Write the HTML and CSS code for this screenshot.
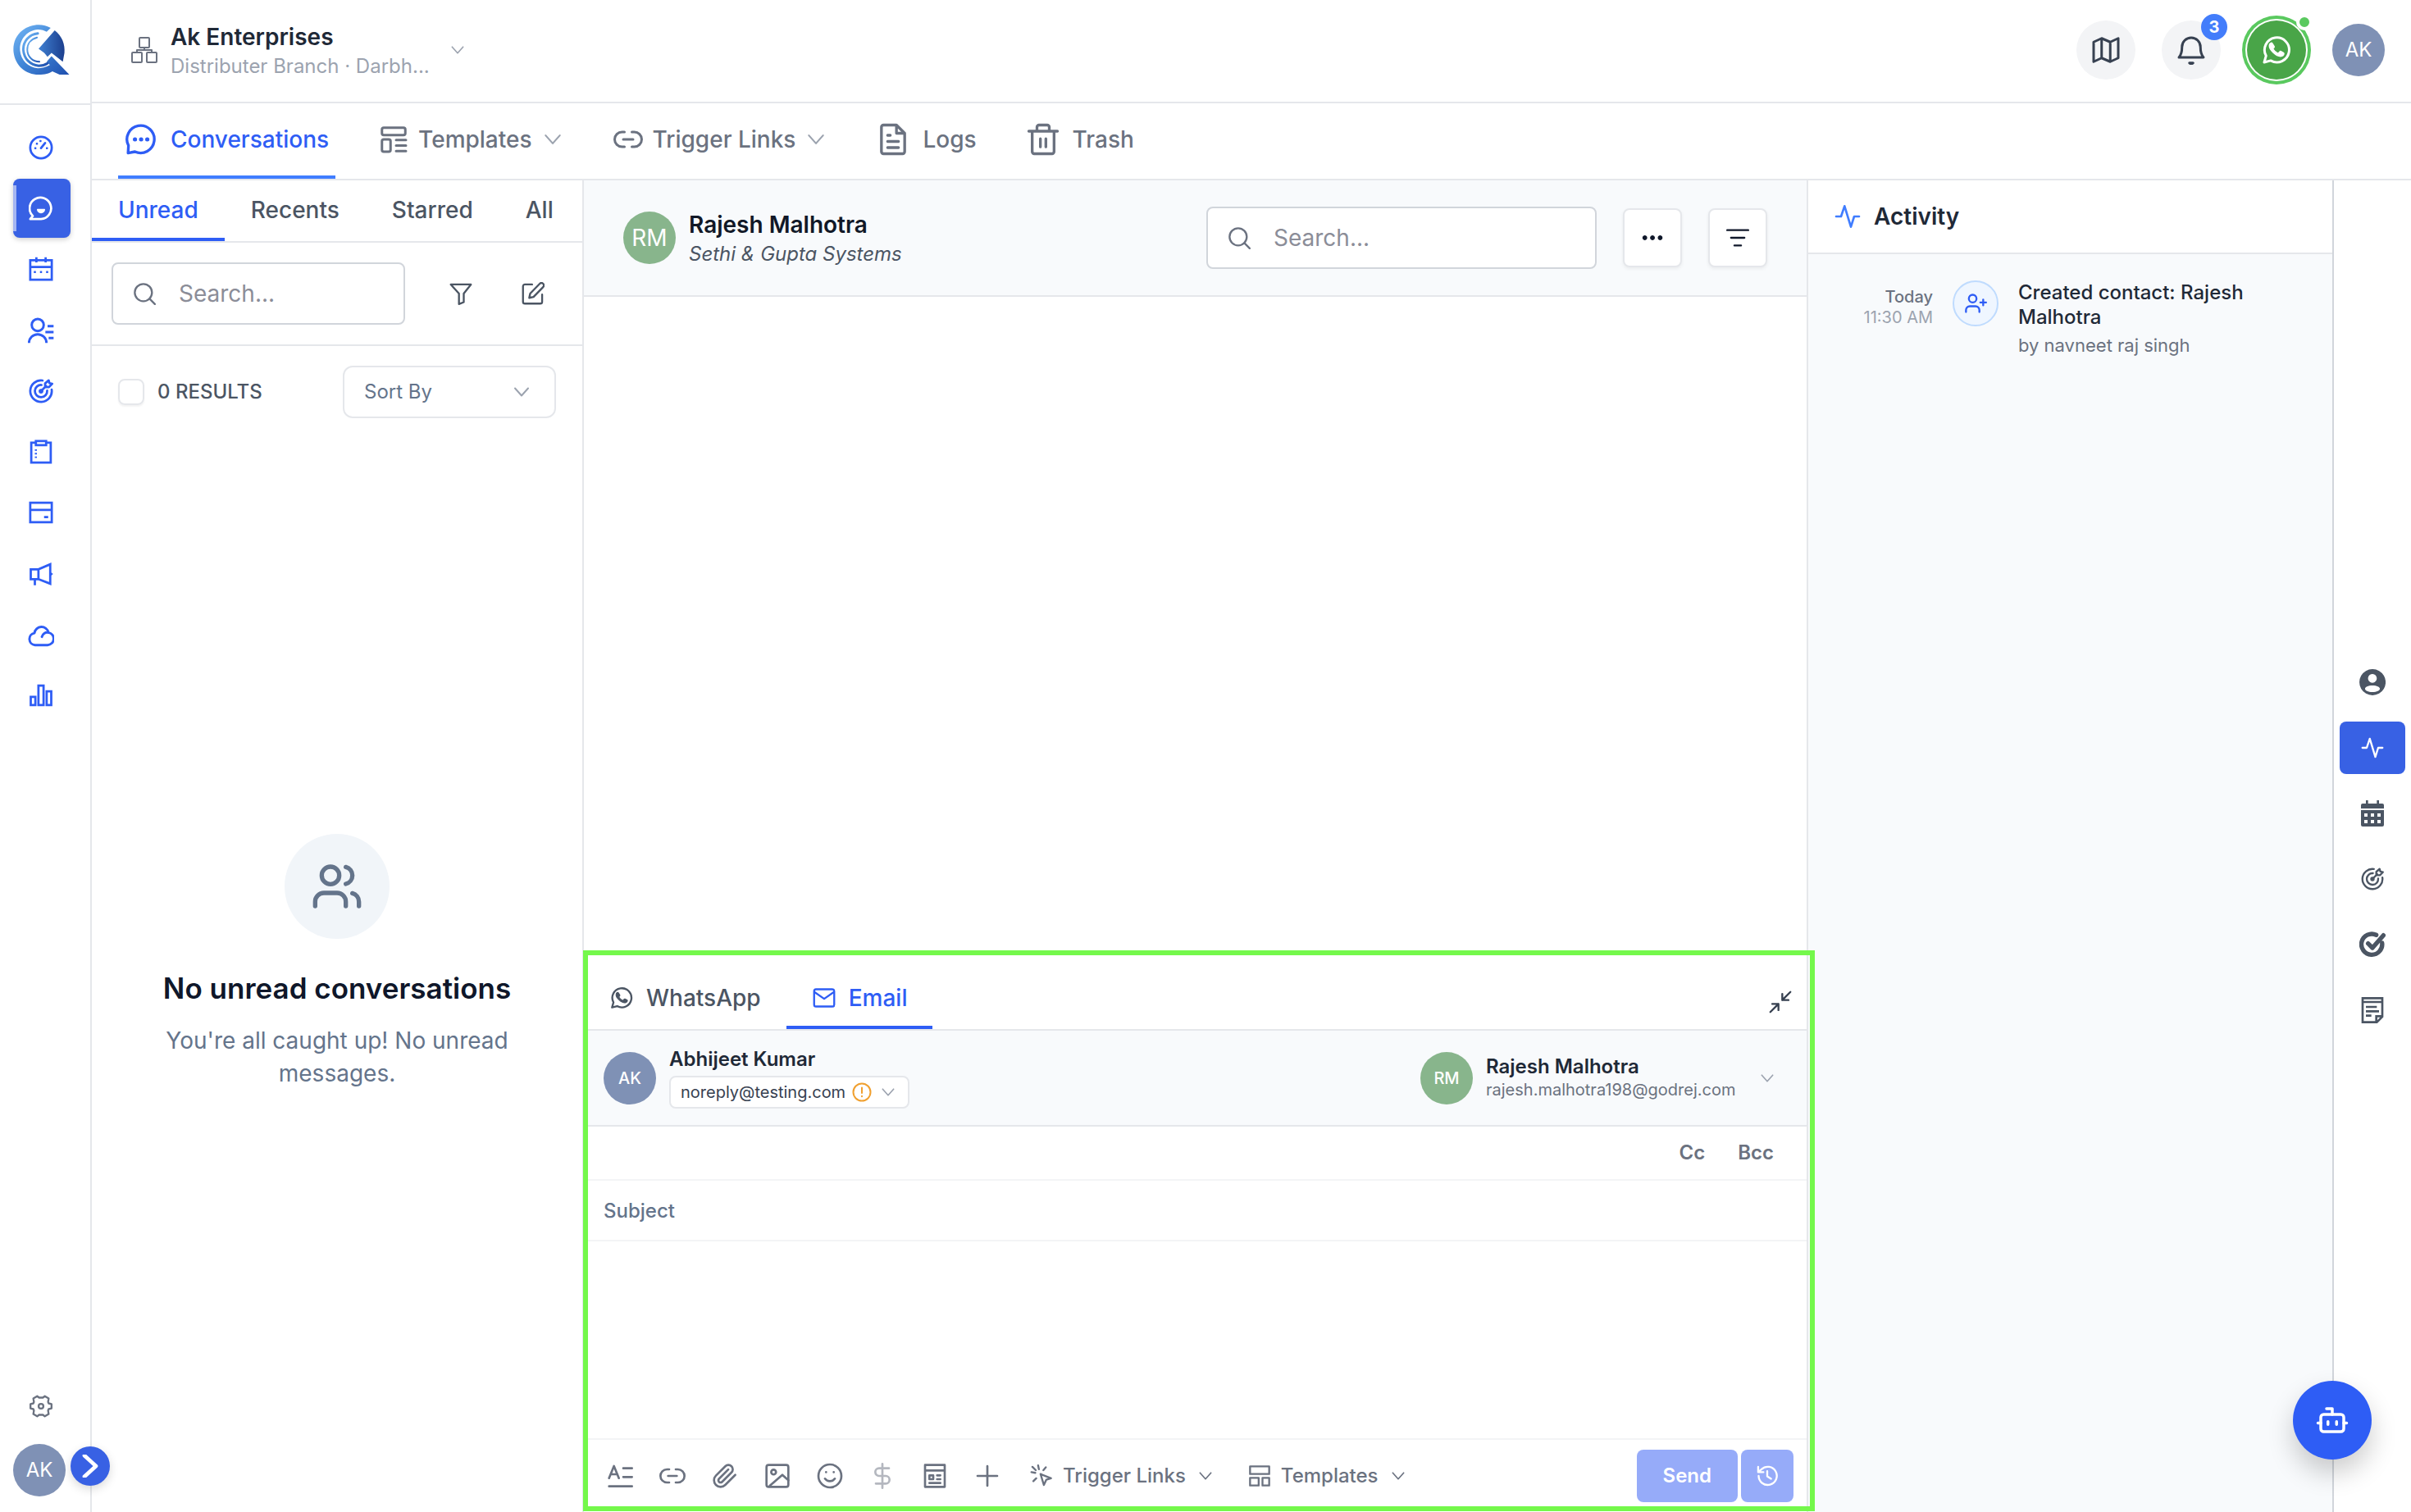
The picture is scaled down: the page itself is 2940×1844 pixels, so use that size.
FILE: index.html
```html
<!DOCTYPE html>
<html lang="en">
<head>
    <meta charset="UTF-8">
    <meta name="viewport" content="width=device-width, initial-scale=1.0">
    <title>Conversations</title>
    <link rel="stylesheet" href="styles.css">
</head>
<body>

<!-- shared icons -->
<svg class="sprite" aria-hidden="true">
    <symbol id="i-chevron" viewBox="0 0 24 24"><path d="M4 7.500l8 9 8-9"/></symbol>
    <symbol id="i-search" viewBox="0 0 24 24"><circle cx="11" cy="11" r="9"/><path d="M17.500 17.500L23 23"/></symbol>
    <symbol id="i-whatsapp" viewBox="0 0 24 24"><path d="M2 22l1.500-5.300A10 10 0 1 1 7.300 20.600z"/><path class="solid" d="M8.600 6.700c-.3-.5-.7-.5-1-.4-.8.3-1.400 1.200-1.400 2.400 0 1.600 1.200 3.500 3.100 5.300 2.200 2.100 4.300 3.100 6 3.100 1.400-.1 2.400-.9 2.700-1.900.1-.5 0-.8-.4-1l-2.100-1c-.4-.2-.7-.1-.9.200l-.9 1.100c-.2.200-.5.300-.9.100-1.500-.7-2.600-1.700-3.500-3.200-.2-.3-.1-.5.1-.8l.6-.8c.2-.2.2-.4.100-.7z"/></symbol>
    <symbol id="i-target" viewBox="0 0 24 24"><path d="M13.500 1.600A10.500 10.500 0 1 0 22.400 10.500"/><path d="M12.500 6A6 6 0 1 0 18 11.500"/><circle class="solid" cx="12" cy="12" r="1.800"/><path d="M12 12l5-5M16 8V4.500L19.500 1.500l.7 2.700 2.700.7L19.800 8z"/></symbol>
    <symbol id="i-activity" viewBox="0 0 24 24"><path d="M1.500 12H6L9.200 2.500 15 21.500 18 12h4.500"/></symbol>
    <symbol id="i-link" viewBox="0 0 24 24"><path d="M9 6H7a6 6 0 0 0 0 12h2M15 6h2a6 6 0 0 1 0 12h-2M8 12h8"/></symbol>
</svg>

<div class="app">

    <aside class="sidebar">
        <a class="logo" href="#" aria-label="Home">
            <svg viewBox="15 30 72 65">
                <defs>
                    <linearGradient id="ring" x1="0" y1="0" x2="1" y2="1">
                        <stop offset="0" stop-color="#74b7f5"/>
                        <stop offset=".5" stop-color="#3f84d6"/>
                        <stop offset="1" stop-color="#1f4fae"/>
                    </linearGradient>
                    <linearGradient id="wing" x1="0" y1="0" x2="1" y2="0">
                        <stop offset="0" stop-color="#3f80d2"/>
                        <stop offset="1" stop-color="#1c3f8e"/>
                    </linearGradient>
                </defs>
                <path fill="url(#ring)" d="M62 35C52 29 37 30 27 38 18 45 15 55 16 65 18 82 31 93 47 93 55 93 60 92 64 89L73 93H85L63 70 57 77 61 81C56 84 51 85 46 85 34 84 25 75 24 63 23 49 33 38 46 37 51 37 54 38 57 40z"/>
                <path fill="none" stroke="url(#ring)" stroke-width="3" d="M46 42C35 43 28 52 28 62 29 74 37 81 47 82 52 82 55 81 58 79"/>
                <path fill="none" stroke="url(#ring)" stroke-width="2" d="M45 47C37 49 33 55 33 62 33 71 40 77 48 77"/>
                <path fill="url(#wing)" d="M67 38C76 45 80 55 79 66L77 77 63 66 58 71 54 66 47 61z"/>
            </svg>
        </a>
        <nav class="side-nav" aria-label="Main">
            <a href="#" aria-label="Dashboard"><svg viewBox="0 0 24 24"><circle cx="12" cy="12" r="10.500"/><path d="M12 12.500l4-5"/><path class="solid" d="M11 5h1v1h-1zM6 12h1v1H6zM17.300 12h1v1h-1zM7.500 7.700h1v1h-1z"/></svg></a>
            <a href="#" class="active" aria-label="Conversations"><svg viewBox="0 0 24 24"><path d="M1.500 22.500L4 19.500A10.500 10.500 0 1 1 12 22.500z"/><path class="solid" d="M8.500 13h7a3.500 3.500 0 0 1-7 0z"/></svg></a>
            <a href="#" aria-label="Calendar"><svg viewBox="0 0 24 24" class="sharp"><path d="M1.500 3.500h21v19h-21zM1.500 10h21M7.500 .5v5M16.500 .5v5"/><path class="solid" d="M5.500 14.500h1v1h-1zM11.500 14.500h1v1h-1zM17.500 14.500h1v1h-1z"/></svg></a>
            <a href="#" aria-label="Contacts"><svg viewBox="0 0 24 24" class="sharp wide"><circle cx="9" cy="7" r="5.500"/><path d="M1 23.500a8 8 0 0 1 16 0M18 8h5.500M16 13.500h7.500M19 19h4.500"/></svg></a>
            <a href="#" aria-label="Opportunities"><svg><use href="#i-target"/></svg></a>
            <a href="#" aria-label="Tasks"><svg viewBox="0 0 24 24" class="sharp"><path d="M7 3H2.500v19.500h19V3H17M7 1.500h10v4H7z"/><path class="solid" d="M6.500 10h1v.5h-1zM6.500 13.500h1v.5h-1zM6.500 17h1v.5h-1z"/></svg></a>
            <a href="#" aria-label="Payments"><svg viewBox="0 0 24 24" class="sharp"><path d="M1.500 2.500h21v19h-21zM1.500 9.500h21M15 16.500h4"/></svg></a>
            <a href="#" aria-label="Marketing"><svg viewBox="0 0 24 24" class="sharp"><path d="M2 7.500h7.500L21 2.500v19L9.500 17H2zM9.500 7.500V17M6 17v6"/><path class="solid" d="M21 10.500l2 1.500-2 1.500z"/></svg></a>
            <a href="#" aria-label="Cloud"><svg viewBox="0 0 24 24" class="wide"><path d="M6.500 21.500a5.500 5.500 0 0 1-.5-10.900A6.500 6.500 0 0 1 18.800 10a5.800 5.800 0 0 1-.8 11.500zM12.800 14a5 5 0 0 1 5.900-3.900"/></svg></a>
            <a href="#" aria-label="Reports"><svg viewBox="0 0 24 24" class="sharp"><path d="M2 13.500h4.500v8H2zM9.500 2.500h5v19h-5zM17.500 8h4.500v13.500h-4.500z"/></svg></a>
        </nav>
        <div class="side-bottom">
            <a href="#" class="settings" aria-label="Settings"><svg viewBox="0 0 24 24"><path d="M23 9.800v4.400l-3 .8-.6 1.400.6 3.800-4 2.400L14 21h-4l-2 1.600-4-2.400.6-3.800L4 15l-3-.8V9.800L4 9l.6-1.400L4 3.800l4-2.400L10 3h4l2-1.600 4 2.400-.6 3.800L20 9z"/><circle cx="12" cy="12" r="2.500"/></svg></a>
            <span class="avatar">AK</span>
            <button class="expand" aria-label="Expand menu"><svg viewBox="0 0 24 24"><path d="M6 1l12 11L6 23"/></svg></button>
        </div>
    </aside>

    <div class="main">
        <header class="topbar">
            <button class="org">
                <svg class="org-icon" viewBox="0 0 32 32"><rect x="10" y="1" width="12" height="12" rx="1"/><rect x="1" y="19" width="12" height="12" rx="1"/><rect x="19" y="19" width="12" height="12" rx="1"/><path d="M16 13v3M7 19v-3h18v3"/></svg>
                <span class="stack">
                    <span class="org-name">Ak Enterprises</span>
                    <span class="org-branch">Distributer Branch · Darbh...</span>
                </span>
                <svg class="chevron"><use href="#i-chevron"/></svg>
            </button>
            <div class="top-actions">
                <button class="round" aria-label="Map"><svg viewBox="0 0 24 24"><path d="M2 5.500l6.500-3 7 3 6.500-3v16l-6.500 3-7-3-6.500 3zM8.500 2.500v16M15.500 5.500v16"/></svg></button>
                <button class="round" aria-label="Notifications"><svg viewBox="0 0 24 24"><path d="M2 18c2-2.200 2.500-4 2.500-8.500a7.500 7.500 0 0 1 15 0c0 4.500.5 6.300 2.500 8.500z"/><path d="M10.500 22.500a2 2 0 0 0 3 0z"/></svg><span class="badge">3</span></button>
                <button class="round whatsapp" aria-label="WhatsApp"><svg><use href="#i-whatsapp"/></svg><span class="dot"></span></button>
                <span class="avatar">AK</span>
            </div>
        </header>

        <nav class="tabs-nav" aria-label="Conversations">
            <a href="#" class="wide-gap active"><svg viewBox="0 0 24 24"><path d="M2.500 22l.3-5.500A10 10 0 1 1 7.500 21z"/><path class="dots" d="M7.500 12h.1M12 12h.1M16.500 12h.1"/></svg>Conversations</a>
            <a href="#"><svg viewBox="0 0 24 24"><rect x="2.500" y="2.500" width="19" height="6" rx="1.500"/><rect x="2.500" y="12" width="7" height="10" rx="1.500"/><path d="M14 12.500h8M14 17h8M14 21.500h8"/></svg>Templates<svg class="chevron"><use href="#i-chevron"/></svg></a>
            <a href="#"><svg><use href="#i-link"/></svg>Trigger Links<svg class="chevron"><use href="#i-chevron"/></svg></a>
            <a href="#" class="wide-gap"><svg viewBox="0 0 24 24"><path d="M14.500 1.500H5A1.500 1.500 0 0 0 3.500 3v18A1.500 1.500 0 0 0 5 22.500h14a1.500 1.500 0 0 0 1.500-1.500V7.500zM14.500 1.500v6h6M8 9h2M8 13.500h8M8 18h8"/></svg>Logs</a>
            <a href="#" class="wide-gap"><svg viewBox="0 0 24 24"><path d="M1.500 6h21M4 6v15A1.500 1.500 0 0 0 5.500 22.500h13A1.500 1.500 0 0 0 20 21V6M7.500 6V3A1.500 1.500 0 0 1 9 1.500h6A1.500 1.500 0 0 1 16.500 3v3M10 11.500v6M14 11.500v6"/></svg>Trash</a>
        </nav>

        <div class="workspace">

            <section class="list-panel">
                <div class="list-tabs">
                    <button class="active">Unread</button>
                    <button>Recents</button>
                    <button>Starred</button>
                    <button>All</button>
                </div>
                <div class="list-search">
                    <label class="search-box">
                        <svg><use href="#i-search"/></svg>
                        <input type="text" placeholder="Search..." aria-label="Search conversations">
                    </label>
                    <div class="list-tools">
                        <button aria-label="Filter"><svg viewBox="0 0 24 24"><path d="M1.500 2.500h21L15 12v9l-5 2V12z"/></svg></button>
                        <button aria-label="Compose"><svg viewBox="0 0 24 24"><path d="M11 2.500H3.500a2 2 0 0 0-2 2v16a2 2 0 0 0 2 2h16a2 2 0 0 0 2-2V13"/><path d="M19 1.700a2.400 2.400 0 0 1 3.500 3.500L12.500 15.500 8 16.500l1-4.500z"/></svg></button>
                    </div>
                </div>
                <div class="list-results">
                    <input type="checkbox" id="select-all">
                    <label for="select-all">0 RESULTS</label>
                    <div class="sort">
                        <select aria-label="Sort By"><option>Sort By</option></select>
                        <svg class="chevron"><use href="#i-chevron"/></svg>
                    </div>
                </div>
                <div class="empty">
                    <span class="empty-icon"><svg viewBox="0 0 24 24"><circle cx="9" cy="7" r="4"/><path d="M2 21v-2a4 4 0 0 1 4-4h6a4 4 0 0 1 4 4v2M16 3.130a4 4 0 0 1 0 7.750M22 21v-2a4 4 0 0 0-3-3.850"/></svg></span>
                    <h2>No unread conversations</h2>
                    <p>You're all caught up! No unread messages.</p>
                </div>
            </section>

            <main class="chat">
                <div class="chat-head">
                    <span class="avatar green large-text">RM</span>
                    <div class="stack">
                        <span class="contact-name">Rajesh Malhotra</span>
                        <em class="contact-company">Sethi &amp; Gupta Systems</em>
                    </div>
                    <label class="search-box">
                        <svg><use href="#i-search"/></svg>
                        <input type="text" placeholder="Search..." aria-label="Search messages">
                    </label>
                    <button class="square" aria-label="More"><svg viewBox="0 0 24 24"><path class="solid" d="M4 10a2 2 0 1 0 .1 0zM12 10a2 2 0 1 0 .1 0zM20 10a2 2 0 1 0 .1 0z"/></svg></button>
                    <button class="square" aria-label="Filter messages"><svg viewBox="0 0 24 24"><path d="M1 4h22M5 12h14M8.500 20h7"/></svg></button>
                </div>
                <div class="messages"></div>

                <div class="composer">
                    <div class="composer-tabs">
                        <button><svg><use href="#i-whatsapp"/></svg>WhatsApp</button>
                        <button class="active"><svg viewBox="0 0 24 24"><rect x="1.500" y="3" width="21" height="18" rx="2"/><path d="M2 6l10 7 10-7"/></svg>Email</button>
                        <button class="collapse" aria-label="Collapse"><svg viewBox="0 0 24 24"><path d="M22.500 1.500L14 10M14 3.500V10h6.500M1.500 22.500L10 14M3.500 14H10v6.500"/></svg></button>
                    </div>
                    <div class="parties">
                        <span class="avatar small-text">AK</span>
                        <div class="sender">
                            <span class="party-name">Abhijeet Kumar</span>
                            <button class="from">noreply@testing.com<svg class="warn" viewBox="0 0 24 24"><circle cx="12" cy="12" r="10.500"/><path d="M12 6.500v6.500M12 16.800v.4"/></svg><svg class="chevron"><use href="#i-chevron"/></svg></button>
                        </div>
                        <button class="recipient">
                            <span class="avatar green small-text">RM</span>
                            <span class="stack">
                                <span class="party-name">Rajesh Malhotra</span>
                                <span class="party-mail">rajesh.malhotra198@godrej.com</span>
                            </span>
                            <svg class="chevron"><use href="#i-chevron"/></svg>
                        </button>
                    </div>
                    <div class="copies">
                        <button>Cc</button>
                        <button>Bcc</button>
                    </div>
                    <input class="subject" type="text" placeholder="Subject" aria-label="Subject">
                    <textarea class="editor" aria-label="Message"></textarea>
                    <div class="toolbar">
                        <div class="tools">
                            <button aria-label="Text style"><svg viewBox="0 0 24 24"><path d="M2 14L6.500 3 11 14M3.500 10.500h6M15 5h8M15 13h8M2 21.500h21"/></svg></button>
                            <button aria-label="Link"><svg><use href="#i-link"/></svg></button>
                            <button aria-label="Attach"><svg viewBox="0 0 24 24"><path d="M21.440 11.050l-9.190 9.190a6 6 0 0 1-8.490-8.490l8.570-8.570A4 4 0 1 1 18 8.840l-8.590 8.570a2 2 0 0 1-2.830-2.830l8.490-8.480"/></svg></button>
                            <button aria-label="Image"><svg viewBox="0 0 24 24"><rect x="2" y="2" width="20" height="20" rx="2"/><circle cx="8.500" cy="8.500" r="2.200"/><path d="M5 21L16.500 11l5.500 5"/></svg></button>
                            <button aria-label="Emoji"><svg viewBox="0 0 24 24"><circle cx="12" cy="12" r="10.500"/><path d="M7.500 14.500a5.500 5.500 0 0 0 9 0M8.500 8.500v.1M15.500 8.500v.1"/></svg></button>
                            <button aria-label="Payment" class="off"><svg viewBox="0 0 24 24"><path d="M12 1v22M18 5H9a3.500 3.500 0 0 0 0 7h6a3.500 3.500 0 0 1 0 7H6"/></svg></button>
                            <button aria-label="Form"><svg viewBox="0 0 24 24"><path d="M3 2h18v20H3zM3 7h18M7 11.500h3.500V15H7zM14 11.500h3M14 15h3M7 18.500h10"/></svg></button>
                            <button aria-label="Add"><svg viewBox="0 0 24 24"><path d="M12 3v18M3 12h18"/></svg></button>
                        </div>
                        <button class="tool-menu"><svg viewBox="0 0 24 24"><path d="M11 10l11 4.500-5 1.500-2.500 5.500zM8.500 1l.8 4M1.500 8l4 .8M3.500 17.500l3-3M14 6l2.500-3M2.500 2.500l3.500 3.500"/></svg>Trigger Links<svg class="chevron"><use href="#i-chevron"/></svg></button>
                        <button class="tool-menu"><svg viewBox="0 0 24 24"><rect x="2" y="2" width="20" height="8"/><rect x="2" y="14" width="9" height="8"/><rect x="15" y="14" width="7" height="8"/></svg>Templates<svg class="chevron"><use href="#i-chevron"/></svg></button>
                        <div class="send-group">
                            <button class="send">Send</button>
                            <button class="schedule" aria-label="Schedule"><svg viewBox="0 0 24 24"><path d="M3 12a9.500 9.500 0 1 0 3-7L2.500 8M2.500 2.500V8H8M12 7v5.500l4 2.500"/></svg></button>
                        </div>
                    </div>
                    <div class="highlight"></div>
                </div>
            </main>

            <aside class="activity">
                <h3><svg><use href="#i-activity"/></svg>Activity</h3>
                <div class="event">
                    <div class="event-date"><strong>Today</strong><span>11:30 AM</span></div>
                    <span class="event-icon"><svg viewBox="0 0 24 24"><circle cx="9" cy="7" r="4"/><path d="M2 21v-2a4 4 0 0 1 4-4h6a4 4 0 0 1 4 4v2M20 8v6M17 11h6"/></svg></span>
                    <div class="event-text">
                        <p>Created contact: Rajesh Malhotra</p>
                        <span>by navneet raj singh</span>
                    </div>
                </div>
            </aside>

            <nav class="rail" aria-label="Contact details">
                <button aria-label="Profile"><svg class="big" viewBox="0 0 24 24"><path class="cut" d="M12 0a12 12 0 1 0 .1 0zM12 4.500a4 4 0 1 1-.1 0zM12 15c4 0 6.800 1.400 6.800 3S16 21 12 21s-6.800-1.400-6.800-3S8 15 12 15z"/></svg></button>
                <button class="active" aria-label="Activity"><svg><use href="#i-activity"/></svg></button>
                <button aria-label="Appointments"><svg class="big" viewBox="0 0 24 24"><path class="cut" d="M6 0h2v3h8V0h2v3h3a1.500 1.500 0 0 1 1.500 1.500V7.500h-21V4.500A1.500 1.500 0 0 1 3 3h3zM1.500 9h21v13.500A1.500 1.500 0 0 1 21 24H3a1.500 1.500 0 0 1-1.500-1.500zM4.500 12v3h3v-3zM10.500 12v3h3v-3zM16.500 12v3h3v-3zM4.500 18v3h3v-3zM10.500 18v3h3v-3zM16.500 18v3h3v-3z"/></svg></button>
                <button aria-label="Opportunities"><svg><use href="#i-target"/></svg></button>
                <button aria-label="Tasks"><svg class="big heavy" viewBox="0 0 24 24"><path d="M15.500 3.200A9.500 9.500 0 1 0 20.800 10.500"/><path d="M8 11l4 4L22 3.500"/></svg></button>
                <button aria-label="Notes"><svg class="big sharp" viewBox="0 0 24 24"><path d="M3 1h18v17l-5 5H3zM3 4.500h18M6 9h10M6 13h12M6 17h5M15.500 22.500v-5H21"/></svg></button>
            </nav>
        </div>
    </div>
</div>

<button class="bot" aria-label="Assistant"><svg viewBox="0 0 24 24"><path d="M12 8V4H8"/><rect x="4" y="8" width="16" height="12" rx="2"/><path d="M2 14h2M20 14h2M15 13v2M9 13v2"/></svg></button>

</body>
</html>
```
FILE: styles.css
```css
* {
    box-sizing: border-box;
}

body {
    margin: 0;
    font-family: Inter, "Liberation Sans", sans-serif;
    font-size: 28px;
    line-height: 40px;
    color: #1f2937;
    background-color: #fff;
}

a {
    color: inherit;
    text-decoration: none;
}

button,
input,
select,
textarea {
    font: inherit;
    color: inherit;
    border: none;
    background: none;
    padding: 0;
    margin: 0;
    outline: none;
}

button {
    display: flex;
    align-items: center;
    justify-content: center;
    cursor: pointer;
}

h2,
h3,
p {
    margin: 0;
}

svg {
    width: 28px;
    height: 28px;
    flex-shrink: 0;
    fill: none;
    stroke: currentColor;
    stroke-width: 2;
    stroke-linecap: round;
    stroke-linejoin: round;
}

.sprite {
    position: absolute;
    width: 0;
    height: 0;
}

.solid {
    fill: currentColor;
    stroke-width: 1;
}

.sharp {
    stroke-linecap: butt;
    stroke-linejoin: miter;
}

.chevron {
    width: 20px;
    height: 20px;
    color: #9ca3af;
}

.stack {
    display: flex;
    flex-direction: column;
    text-align: left;
}

.avatar {
    width: 64px;
    height: 64px;
    flex-shrink: 0;
    border-radius: 50%;
    display: flex;
    align-items: center;
    justify-content: center;
    background-color: #7f91b5;
    color: #fff;
    font-size: 24px;
}

.avatar.green {
    background-color: #88b58c;
}

.avatar.large-text {
    font-size: 28px;
}

.avatar.small-text {
    font-size: 20px;
    font-weight: 500;
}

.app {
    display: flex;
    min-height: 100vh;
}

/* left sidebar */
.sidebar {
    width: 112px;
    flex-shrink: 0;
    display: flex;
    flex-direction: column;
    border-right: 2px solid #e5e7eb;
}

.logo {
    height: 128px;
    padding: 0 0 4px 15px;
    display: flex;
    align-items: center;
    border-bottom: 2px solid #e5e7eb;
}

.logo svg {
    width: 72px;
    height: 64px;
    stroke: none;
}

.side-nav {
    height: 756px;
    padding: 16px 24px 0 16px;
    display: flex;
    flex-direction: column;
    justify-content: space-between;
    color: #2e5df5;
}

.side-nav a {
    height: 72px;
    padding-right: 3px;
    display: flex;
    align-items: center;
    justify-content: center;
    border-radius: 8px;
}

.side-nav svg {
    width: 30px;
    height: 30px;
    stroke-width: 2.2;
}

.side-nav .active {
    position: relative;
    background-color: #3861e4;
    color: #fff;
    box-shadow: 0 2px 6px rgba(0, 0, 0, 0.2);
}

.side-nav .active::before {
    content: "";
    position: absolute;
    left: 0;
    top: 8px;
    bottom: 8px;
    width: 4px;
    background-color: #a5b6f2;
}

.side-nav .wide {
    width: 32px;
    height: 32px;
}

.side-bottom {
    position: relative;
    margin-top: auto;
    padding: 0 0 19px 16px;
}

.settings {
    display: flex;
    padding-left: 20px;
    margin-bottom: 32px;
    color: #6b7280;
}

.expand {
    position: absolute;
    right: -24px;
    bottom: 32px;
    width: 48px;
    height: 48px;
    border-radius: 50%;
    background-color: #3861e4;
    color: #fff;
    box-shadow: 0 4px 12px rgba(0, 0, 0, 0.15);
}

.expand svg {
    stroke-width: 4;
}

/* top bar */
.main {
    flex: 1;
    min-width: 0;
    display: flex;
    flex-direction: column;
}

.topbar {
    height: 126px;
    padding: 0 32px 2px 48px;
    display: flex;
    align-items: center;
    justify-content: space-between;
    border-bottom: 2px solid #e5e7eb;
}

.org {
    gap: 16px;
}

.org-icon {
    width: 32px;
    height: 32px;
    color: #6b7280;
}

.org .chevron {
    margin-left: 8px;
}

.org-name,
.contact-name {
    font-weight: 600;
}

.org-branch {
    font-size: 24px;
    line-height: 32px;
    color: #9ca3af;
}

.top-actions {
    display: flex;
    align-items: center;
    gap: 32px;
}

.round {
    position: relative;
    width: 72px;
    height: 72px;
    border-radius: 50%;
    background-color: #f3f4f6;
    color: #374151;
}

.round svg {
    width: 36px;
    height: 36px;
}

.badge {
    position: absolute;
    top: -8px;
    right: -8px;
    width: 32px;
    height: 32px;
    border-radius: 50%;
    background-color: #437dfb;
    color: #fff;
    font-size: 20px;
    line-height: 32px;
    font-weight: 700;
    text-align: center;
}

.whatsapp {
    background-color: #49a548;
    color: #fff;
    box-shadow: 0 0 0 2px #fff, 0 0 0 6px #5ac95f;
}

.dot {
    position: absolute;
    top: -8px;
    right: -8px;
    width: 20px;
    height: 20px;
    border: 4px solid #fff;
    border-radius: 50%;
    background-color: #5ac95f;
}

.tabs-nav {
    height: 94px;
    padding: 0 32px;
    display: flex;
    gap: 45px;
    border-bottom: 2px solid #e5e7eb;
    color: #6b7280;
    font-weight: 500;
}

.tabs-nav a {
    display: flex;
    align-items: center;
    gap: 12px;
    padding: 0 8px;
    border-bottom: 4px solid transparent;
}

.tabs-nav svg {
    width: 36px;
    height: 36px;
}

.tabs-nav .wide-gap {
    gap: 16px;
}

.tabs-nav .wide-gap svg {
    width: 40px;
    height: 40px;
}

.tabs-nav .chevron {
    width: 26px;
    height: 26px;
}

.tabs-nav .active {
    color: #2e5df5;
    border-bottom-color: #407dff;
}

.workspace {
    flex: 1;
    display: flex;
}

/* conversation list */
.list-panel {
    width: 600px;
    flex-shrink: 0;
    display: flex;
    flex-direction: column;
    border-right: 2px solid #e5e7eb;
    color: #4b5563;
}

.list-tabs {
    height: 76px;
    display: flex;
    border-bottom: 2px solid #e5e7eb;
    font-weight: 500;
}

.list-tabs button {
    padding: 2px 32px 0;
    border-bottom: 4px solid transparent;
}

.list-tabs .active {
    color: #2e5df5;
    border-bottom-color: #2e5df5;
}

.list-search {
    height: 126px;
    padding: 0 46px 0 24px;
    display: flex;
    align-items: center;
    gap: 54px;
    border-bottom: 2px solid #e5e7eb;
}

.search-box {
    height: 76px;
    flex: 1;
    min-width: 0;
    display: flex;
    align-items: center;
    gap: 28px;
    padding: 0 24px;
    border: 2px solid #d1d5db;
    border-radius: 8px;
    background-color: #fff;
    color: #6b7280;
}

.search-box input {
    width: 100%;
    min-width: 0;
}

.search-box input::placeholder {
    color: #8b8d98;
}

.list-tools {
    display: flex;
    gap: 60px;
}

.list-results {
    padding: 24px 32px;
    display: flex;
    align-items: center;
    gap: 16px;
    font-size: 24px;
    line-height: 32px;
    font-weight: 500;
}

.list-results input {
    appearance: none;
    width: 32px;
    height: 32px;
    border: 2px solid #e5e7eb;
    border-radius: 8px;
    box-shadow: 0 2px 2px rgba(0, 0, 0, 0.05);
}

.sort {
    position: relative;
    width: 260px;
    margin-left: auto;
}

.sort select {
    appearance: none;
    width: 100%;
    height: 64px;
    padding: 0 24px;
    border: 2px solid #e5e7eb;
    border-radius: 12px;
    color: #64748b;
    font-weight: 400;
}

.sort .chevron {
    position: absolute;
    top: 20px;
    right: 30px;
    width: 24px;
    height: 24px;
}

.empty {
    flex: 1;
    padding: 0 64px 32px;
    display: flex;
    flex-direction: column;
    align-items: center;
    justify-content: center;
    text-align: center;
}

.empty-icon {
    width: 128px;
    height: 128px;
    border-radius: 50%;
    display: flex;
    align-items: center;
    justify-content: center;
    background-color: #f1f5f9;
    color: #64748b;
}

.empty-icon svg {
    width: 64px;
    height: 64px;
}

.empty h2 {
    margin: 36px 0 20px;
    font-size: 35px;
    line-height: 48px;
    font-weight: 600;
    color: #0f172a;
}

.empty p {
    color: #64748b;
}

/* chat */
.chat {
    flex: 1;
    min-width: 0;
    display: flex;
    flex-direction: column;
    border-right: 2px solid #e5e7eb;
}

.chat-head {
    height: 142px;
    padding: 0 48px;
    display: flex;
    align-items: center;
    gap: 32px;
    background-color: #f8fafc;
    border-bottom: 2px solid #e5e7eb;
}

.chat-head .stack {
    margin-left: -16px;
    margin-right: auto;
    color: #111827;
}

.chat-head .contact-company {
    font-size: 24px;
    line-height: 32px;
    color: #4b5563;
}

.chat-head .search-box {
    flex: 0 1 476px;
}

.square {
    width: 72px;
    height: 72px;
    border: 2px solid #e5e7eb;
    border-radius: 8px;
    background-color: #fff;
    color: #0f172a;
    box-shadow: 0 2px 4px rgba(0, 0, 0, 0.06);
}

.messages {
    flex: 1;
}

.composer {
    position: relative;
}

.composer-tabs {
    height: 92px;
    padding-top: 16px;
    display: flex;
    border-bottom: 2px solid #e5e7eb;
    font-weight: 500;
    color: #4b5563;
}

.composer-tabs button {
    gap: 16px;
    padding: 2px 31px 0 32px;
    border-bottom: 4px solid transparent;
}

.composer-tabs .active {
    color: #2e5df5;
    border-bottom-color: #2e5df5;
}

.composer-tabs .collapse {
    margin-left: auto;
    padding: 12px 18px 0;
    color: #374151;
}

.parties {
    height: 117px;
    padding: 0 38px 0 24px;
    display: flex;
    align-items: center;
    gap: 16px;
    background-color: #f8fafc;
    border-bottom: 2px solid #e5e7eb;
}

.party-name {
    font-size: 24px;
    line-height: 28px;
    font-weight: 600;
    color: #1f2937;
}

.sender {
    display: flex;
    flex-direction: column;
    gap: 6px;
}

.from {
    height: 40px;
    padding: 0 14px 0 12px;
    border: 2px solid #e5e7eb;
    border-radius: 8px;
    background-color: #fff;
    font-size: 20px;
    color: #374151;
}

.from .warn {
    width: 24px;
    height: 24px;
    margin: 0 10px 0 8px;
    color: #f0a030;
}

.recipient {
    margin-left: auto;
    gap: 16px;
}

.recipient .stack {
    min-width: 311px;
}

.recipient .chevron {
    margin-left: 6px;
}

.party-mail {
    font-size: 20px;
    line-height: 28px;
    color: #6b7280;
}

.copies {
    height: 66px;
    padding-right: 40px;
    display: flex;
    justify-content: flex-end;
    gap: 40px;
    border-bottom: 2px solid #f3f4f6;
    color: #6b7280;
    font-size: 24px;
    font-weight: 600;
}

.subject {
    display: block;
    width: 100%;
    height: 74px;
    padding: 0 24px;
    border-bottom: 2px solid #f3f4f6;
    font-size: 24px;
    font-weight: 500;
}

.subject::placeholder {
    color: #64748b;
}

.editor {
    display: block;
    width: 100%;
    height: 240px;
    padding: 24px;
    resize: none;
}

.toolbar {
    height: 90px;
    padding: 0 16px 0 28px;
    display: flex;
    align-items: center;
    border-top: 2px solid #f3f4f6;
    color: #6b7280;
    font-size: 24px;
    font-weight: 500;
}

.toolbar svg {
    width: 32px;
    height: 32px;
}

.tools {
    display: flex;
    gap: 32px;
    margin-right: 36px;
}

.tools .off {
    opacity: 0.5;
}

.tool-menu {
    gap: 12px;
    margin-right: 42px;
}

.tool-menu svg {
    width: 28px;
    height: 28px;
}

.tool-menu .chevron {
    width: 20px;
    height: 20px;
    margin-left: 2px;
    color: #6b7280;
}

.send-group {
    display: flex;
    gap: 4px;
    margin-left: auto;
    color: #fff;
    font-weight: 600;
}

.send-group button {
    height: 64px;
    border-radius: 8px;
    background-color: #96abf9;
}

.send {
    padding: 0 32px;
}

.schedule {
    width: 64px;
}

.schedule svg {
    width: 28px;
    height: 28px;
}

/* frame around the composer, over the panel borders */
.highlight {
    position: absolute;
    top: -6px;
    right: -10px;
    bottom: 1px;
    left: -1px;
    border: 6px solid #74f84b;
    pointer-events: none;
}

/* activity */
.activity {
    width: 639px;
    flex-shrink: 0;
    background-color: #f8fafc;
}

.activity h3 {
    height: 90px;
    padding: 0 32px;
    display: flex;
    align-items: center;
    gap: 16px;
    border-bottom: 2px solid #e5e7eb;
    background-color: #fff;
    font-size: 28px;
    font-weight: 600;
}

.activity h3 svg {
    width: 32px;
    height: 32px;
    color: #407dff;
}

.event {
    display: flex;
    gap: 24px;
    padding: 32px;
}

.event-date {
    width: 120px;
    padding-top: 8px;
    display: flex;
    flex-direction: column;
    text-align: right;
    font-size: 20px;
    line-height: 25px;
    color: #9ca3af;
}

.event-date strong {
    font-weight: 500;
    color: #6b7280;
}

.event-icon {
    width: 56px;
    height: 56px;
    flex-shrink: 0;
    display: flex;
    align-items: center;
    justify-content: center;
    border: 2px solid #bfdbfe;
    border-radius: 50%;
    background-color: #eff6ff;
    color: #2e5df5;
}

.event-text {
    flex: 1;
    font-size: 22px;
    line-height: 30px;
    color: #6b7280;
}

.event-text p {
    margin-bottom: 4px;
    font-size: 24px;
    font-weight: 500;
    color: #1f2937;
}

/* right rail */
.rail {
    width: 96px;
    flex-shrink: 0;
    display: flex;
    flex-direction: column;
    align-items: center;
    justify-content: center;
    gap: 16px;
    border-left: 2px solid #d1d5db;
    color: #4b5563;
}

.rail button {
    width: 80px;
    height: 64px;
    border-radius: 8px;
}

.rail .active {
    background-color: #3861e4;
    color: #fff;
}

.rail .big {
    width: 32px;
    height: 32px;
}

.rail .heavy {
    stroke-width: 4;
}

.cut {
    fill: currentColor;
    fill-rule: evenodd;
    stroke: none;
}

.bot {
    position: fixed;
    right: 48px;
    bottom: 64px;
    width: 96px;
    height: 96px;
    border-radius: 50%;
    background-color: #2e5df5;
    color: #fff;
    box-shadow: 0 16px 32px rgba(0, 0, 0, 0.2);
}

.bot svg {
    width: 42px;
    height: 42px;
}

.dots {
    stroke-width: 3;
}
```
